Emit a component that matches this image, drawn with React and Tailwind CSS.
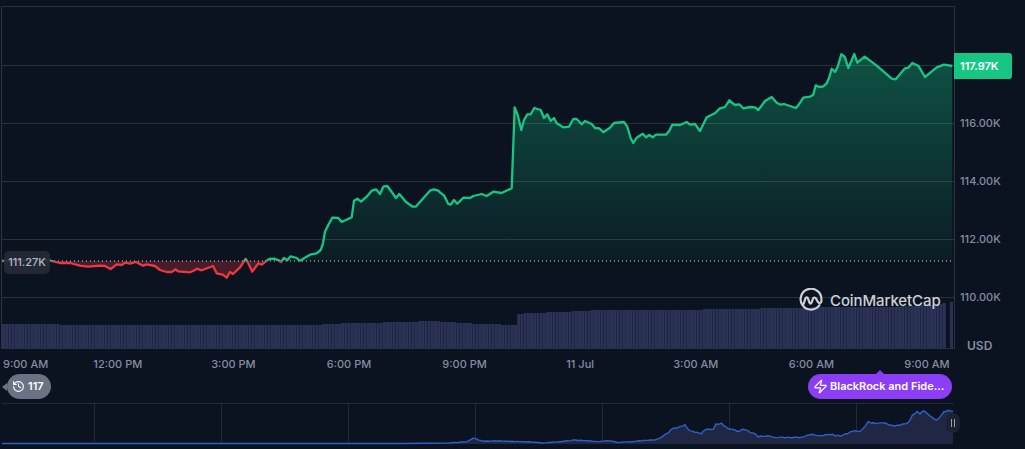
import { History, Zap } from "lucide-react";

const FONT = "font-['Inter','Liberation_Sans',sans-serif]";

const P = [
  [2,261],[20,261],[30,259.5],[40,259.5],[50,260.7],[60,263],[70,263],[80,265.7],[88,266.7],[100,265.7],[105,266],[110.7,269],[116.7,264.3],[121.7,265],[125,262.7],[130,263.7],[136,262],[143,265.7],[146.7,264.3],[155,266],[160,270],[166.7,272],[171.7,272],[175.7,269.3],[178,271.3],[190,272.3],[193,271],[197,268.7],[201.7,270.3],[213,266],[216.7,273.3],[222.7,274.7],[226.7,277.7],[230,272],[233,274],[240,267.3],[245.7,259],[248,262.7],[252.3,271.7],[258.3,263.3],[261.7,264.7],[266.7,260.7],[269.3,259],[274,258.7],[278,260],[281,262],[284,258],[287.3,260.3],[290.7,256.3],[296.7,258],[300,261],[304,258.3],[310,254.7],[316.7,253.3],[320.7,250],[323,243.3],[325,231.7],[328.3,225],[332.3,217.7],[338.3,218],[341.7,222],[351.7,217.3],[354,200.7],[357.3,198.7],[361,201.7],[366.7,196.7],[371.7,190.7],[376,189.3],[380,194],[383.3,186.7],[387.3,186],[391.7,192],[396,198],[399.3,194],[406,202],[412.7,206.7],[415.7,206.7],[430,190.7],[434,189.3],[438.3,190.7],[440,192.3],[444,195.3],[448.3,204],[450.7,204.7],[454,200],[457.3,203.7],[463.3,197.7],[470,198],[473.3,196],[481.7,194],[486.7,196],[493.3,191.7],[501.7,193],[511.7,188.3],[514.7,107.3],[517.7,115],[521.3,130],[524,120],[527.3,114.3],[530.7,114.3],[534.3,108],[540.7,110],[544,118],[547.3,114.3],[550.7,121],[554,118],[556.7,123.3],[563.3,127.3],[569,126.7],[573.3,119],[576.7,119],[581.7,124.3],[585,121],[591.7,124],[595,128],[599.3,128.3],[603.3,132.3],[610,127.7],[614,123],[624,122],[627.3,126.7],[630.7,138.3],[633.3,143],[636.7,137.7],[642.7,133.7],[646,137.3],[649.3,135],[652.7,137.3],[656,134.7],[666,134.7],[669.3,130.7],[672.3,124.7],[680,125],[686.7,122],[690,124.7],[695,124],[700,131],[706.7,117.3],[715,113.3],[720,108.3],[725,107],[729.3,100.3],[735,105],[739.3,104.3],[743.3,108.3],[750,107],[755,107.3],[758.3,110],[765,101],[771.7,97],[776.7,102.7],[780.7,104.7],[784,104],[796,108],[798.3,105.3],[803.3,97.7],[810,96.7],[813.3,94.7],[815.7,85.3],[819.3,87],[823.3,86.3],[826.7,83.3],[829.3,77.3],[831.7,68.7],[835,72],[837.7,66.7],[841.3,54.3],[844.7,56.7],[848.3,68],[854.3,54],[857.3,62.7],[864.7,56.7],[876.7,65.7],[891.7,78.7],[895.7,79.3],[905,68.3],[908.3,67.7],[912.3,63],[918.3,65.7],[925,77],[936.7,67.3],[944,64.7],[952.3,66],
];
const linePts = P.map((p) => p.join(",")).join(" ");
const areaPts = `2,261 ${linePts} 952.3,261`;

const M0 = [
  [2,443.5],[400,443.5],[450,443],[466.7,441.7],[473.3,438],[481.7,441],[496.7,441],[530,442],[543,443],[566.7,441],[573,440],[600,441.5],[610,440.7],[616.7,442.5],[653,440],[663.3,436],[668.3,433],[673.3,428],[676.7,428],[678,427],[685,424.5],[690,431],[695,432.5],[701.7,434],[703,431],[706.7,429.5],[713.3,429.5],[716,424],[721.7,423],[728.3,429],[736.7,431],[745,429.5],[753.3,433],[758.3,437],[770,436],[785,438],[796.7,437.5],[810,434.7],[843,435.3],[850,432],[856.7,431],[860,431.3],[868.3,421.7],[876.7,423.3],[885,422.7],[891.7,425.3],[900,425.3],[908.3,422.7],[912.3,415],[917.3,411.7],[920,414],[924,411],[930,415.7],[936.7,420],[944,411.7],[948.3,410],[953,411.3],
];
const NOISE = [0, 0.7, -0.4, 0.9, -0.8, 0.3, -0.2, 0.8, -0.6];
const M = [];
for (let i = 0; i < M0.length - 1; i++) {
  const [x0, y0] = M0[i];
  const [x1, y1] = M0[i + 1];
  const n = x0 < 440 ? 1 : Math.max(1, Math.round((x1 - x0) / 2.5));
  for (let k = 0; k < n; k++) {
    const x = x0 + ((x1 - x0) * k) / n;
    const y = y0 + ((y1 - y0) * k) / n;
    const amp = k === 0 || x0 < 640 ? 0.3 : 1;
    M.push([+x.toFixed(1), +(y + (x0 < 440 ? 0 : NOISE[Math.floor(x) % 9] * amp)).toFixed(1)]);
  }
}
M.push(M0[M0.length - 1]);
const miniLine = M.map((p) => p.join(",")).join(" ");
const miniArea = `2,444 ${miniLine} 953,444`;

const TOPS = [[2,324.3],[200,325],[300,325.5],[340,323.5],[400,322],[430,321],[446,322],[470,323.5],[514,325],[516,314.5],[527,313],[560,312],[580,311],[600,310],[700,309.5],[790,308],[830,307],[900,306.5],[930,305],[946,303]];
function topAt(x) {
  for (let i = 1; i < TOPS.length; i++) {
    if (x <= TOPS[i][0]) {
      const [x0, y0] = TOPS[i - 1];
      const [x1, y1] = TOPS[i];
      if (x1 - x0 <= 3) return x < x1 ? y0 : y1;
      return y0 + ((y1 - y0) * (x - x0)) / (x1 - x0);
    }
  }
  return 303;
}
const bars = [];
for (let x = 2; x < 946; x += 3.2) {
  bars.push([x, Math.round(topAt(x))]);
}

const Y_LABELS = ["116.00K", "114.00K", "112.00K", "110.00K"];
const X_LABELS = ["12:00 PM", "3:00 PM", "6:00 PM", "9:00 PM", "11 Jul", "3:00 AM", "6:00 AM", "9:00 AM"];

export default function App() {
  return (
    <div className={`relative w-[1025px] h-[449px] overflow-hidden bg-[#0b1320] ${FONT}`}>
      {/* main chart row */}
      <div className="flex h-[349px]">
        <svg width="955" height="349" viewBox="0 0 955 349" className="block shrink-0">
          <defs>
            <linearGradient id="g" gradientUnits="userSpaceOnUse" x1="0" y1="54" x2="0" y2="261">
              <stop offset="0" stopColor="#16c784" stopOpacity="0.35" />
              <stop offset="1" stopColor="#16c784" stopOpacity="0.05" />
            </linearGradient>
            <clipPath id="above"><rect x="0" y="0" width="955" height="261" /></clipPath>
            <clipPath id="below"><rect x="0" y="261" width="955" height="60" /></clipPath>
          </defs>
          <polygon points={areaPts} fill="url(#g)" clipPath="url(#above)" />
          <polygon points={areaPts} fill="#ea3943" fillOpacity="0.27" clipPath="url(#below)" />
          {[65, 123, 181, 239, 297].map((y) => (
            <line key={y} x1="1" x2="954" y1={y + 0.5} y2={y + 0.5} stroke="#fff" strokeOpacity="0.13" />
          ))}
          <path d="M1.5 349V6.5H954.5V349" fill="none" stroke="#2c3240" />
          <line x1="50" x2="954" y1="261" y2="261" stroke="#d5d8de" strokeDasharray="1 3" />
          <polyline points={linePts} fill="none" stroke="#16c784" strokeWidth="2.3" strokeLinejoin="round" clipPath="url(#above)" />
          <polyline points={linePts} fill="none" stroke="#ea3943" strokeWidth="2.3" strokeLinejoin="round" clipPath="url(#below)" />
          {bars.map(([x, y]) => (
            <rect key={"b" + x} x={x} y={y} width="3" height={348 - y} fill="#2a3356" />
          ))}
          <rect x="950" y="302" width="3" height="46" fill="#2a3356" />
          <line x1="1" x2="954" y1="348.5" y2="348.5" stroke="#2c3240" />
        </svg>
        <div className="relative flex-1 pt-[94px] pl-[5px] text-[11px] font-medium leading-none text-[#858da2]">
          {Y_LABELS.map((l) => (
            <div key={l} className="h-[58px] flex items-center">{l}</div>
          ))}
          <div className="pl-[7px] pt-[14px] text-[12px] font-semibold text-[#858da2]">USD</div>
        </div>
      </div>

      {/* x axis */}
      <div className="flex h-[25px] items-center pt-[5px] text-[11px] font-medium leading-none text-[#858da2]">
        <div className="w-[60px] pl-[3px] shrink-0">9:00 AM</div>
        {X_LABELS.map((l) => (
          <div key={l} className="w-[115.6px] shrink-0 text-center">{l}</div>
        ))}
      </div>

      {/* event pills */}
      <div className="flex justify-between h-[25px] pl-[7px] pr-[73px]">
        <div className="relative flex items-center gap-[3px] h-[25px] w-[44px] rounded-[12.5px] bg-[#6a7284] pl-[5px] text-[11px] font-semibold text-white">
          <span className="absolute left-[-5px] top-[8.5px] w-0 h-0 border-y-[4px] border-y-transparent border-r-[5px] border-r-[#6a7284]" />
          <History size={13} strokeWidth={2} />
          <span>117</span>
        </div>
        <div className="relative flex items-center gap-[2px] h-[25px] w-[144px] rounded-[12.5px] bg-[#8b3ef6] pl-[5px] text-[11px] font-semibold text-white whitespace-nowrap">
          <span className="absolute left-[67px] top-[-4px] w-0 h-0 border-x-[5px] border-x-transparent border-b-[5px] border-b-[#8b3ef6]" />
          <Zap size={15} strokeWidth={2} />
          <span>BlackRock and Fide...</span>
        </div>
      </div>

      {/* mini chart */}
      <svg width="1025" height="50" viewBox="0 399 1025 50" className="block">
        <line x1="2" x2="954" y1="403.5" y2="403.5" stroke="#232936" />
        {[94, 221, 348, 475, 602, 729, 856].map((x) => (
          <line key={x} x1={x + 0.5} x2={x + 0.5} y1="404" y2="444" stroke="#232936" />
        ))}
        <polygon points={miniArea} fill="#1f2742" />
        <polyline points={miniLine} fill="none" stroke="#2f5fc9" strokeWidth="1.4" />
      </svg>

      {/* overlays */}
      <div className="absolute left-[4px] top-[251px] flex h-[23px] w-[46px] items-center justify-center rounded-[5px] bg-[#262b36]/90 text-[11px] font-medium leading-none text-[#b4b8c2]">
        111.27K
      </div>
      <div className="absolute left-[954px] top-[53px] flex h-[26px] w-[58px] items-center pl-[6px] rounded-r-[3px] bg-[#16c784] text-[11px] font-semibold leading-none text-white">
        117.97K
      </div>
      <div className="absolute left-[799px] top-[288px] flex items-center gap-[7px] text-[#cdd0d6]">
        <svg width="24" height="24" viewBox="0 0 24 24" fill="none" stroke="currentColor" strokeWidth="2.2" strokeLinecap="round" strokeLinejoin="round">
          <path d="M20.5 17.2A10.4 10.4 0 1 1 22.4 12c0 .5 0 1 0 1.3-.3 2-2.3 2.2-3.3.9l-2-3.6c-1.100-1.700-2.600-1.200-3.100.1l-1.300 3.600c-.8 1.700-1.700 1.600-2.400 0L9.100 10.600c-.7-1.800-2.200-1.500-2.800 0L4.600 16" />
        </svg>
        <span className="text-[15px] font-medium leading-none tracking-[-0.1px]">CoinMarketCap</span>
      </div>
      <div className="absolute left-[946px] top-[413px] flex h-[20px] w-[14px] items-center justify-center gap-[1.500px] rounded-[7px] bg-[#1c2230]">
        <span className="h-[8px] w-[1.500px] bg-[#9aa0ad]" />
        <span className="h-[8px] w-[1.500px] bg-[#9aa0ad]" />
      </div>
    </div>
  );
}
